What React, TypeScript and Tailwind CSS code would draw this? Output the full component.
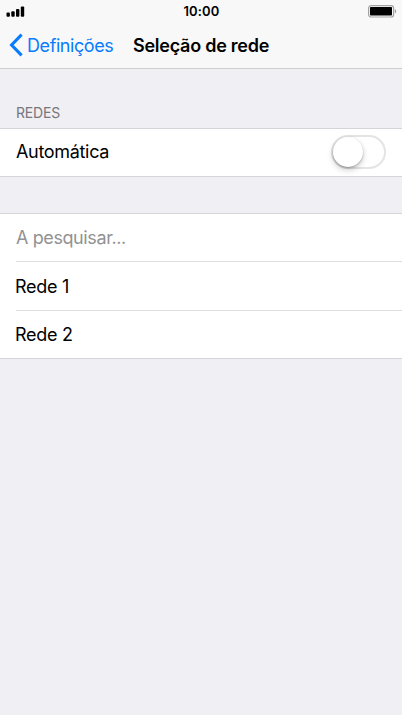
/* ---------- DATA ---------- */

const networks = ["Rede 1", "Rede 2"];

/* ---------- ICONS ---------- */

function SignalIcon() {
  return (
    <svg width="19" height="11" viewBox="0 0 19 11">
      <rect x="0.5" y="6.6" width="3.4" height="4.2" rx="1" />
      <rect x="5.3" y="5.2" width="3.4" height="5.6" rx="1" />
      <rect x="10" y="3" width="3.4" height="7.8" rx="1" />
      <rect x="14.8" y="0.4" width="3.4" height="10.4" rx="1" />
    </svg>
  );
}

function BatteryIcon() {
  return (
    <svg width="29" height="13" viewBox="0 0 29 13" fill="none">
      <rect x="0.6" y="0.6" width="25" height="11.4" rx="2.6" stroke="#a3a3a3" strokeWidth="1.2" />
      <rect x="2" y="2" width="22" height="8.6" rx="0.8" fill="#000" />
      <path d="M26.8 4.2c1.9.6 1.9 3.6 0 4.2z" fill="#a3a3a3" />
    </svg>
  );
}

function BackIcon() {
  return (
    <svg width="14" height="24" viewBox="0 0 14 24" fill="none">
      <path d="M12.6 1.7 2.6 12l10 10.3" stroke="#087cfb" strokeWidth="3.1" />
    </svg>
  );
}

/* ---------- COMPONENT ---------- */

export default function App() {
  return (
    <div className="h-[715px] w-[402px] overflow-hidden bg-[#efeff4] font-['Inter',sans-serif] text-black">
      <header className="h-[69px] border-b border-[#cdcdd0] bg-[#f8f8f8]">
        <div className="grid h-[22px] grid-cols-3 items-center pr-[5px] pl-1.5">
          <SignalIcon />
          <span className="text-center text-[13px] leading-none font-semibold tracking-[0.15px]">
            10:00
          </span>
          <div className="flex justify-end">
            <BatteryIcon />
          </div>
        </div>

        <div className="flex h-[46px] items-center pl-[9px]">
          <button className="flex w-[124px] items-center gap-1 text-[#087cfb]">
            <BackIcon />
            <span className="text-[18px] tracking-[-0.42px]">Definições</span>
          </button>
          <h1 className="text-[18px] font-semibold tracking-[-0.25px] whitespace-nowrap">
            Seleção de rede
          </h1>
        </div>
      </header>

      <main>
        <h2 className="flex h-[59px] items-end px-4 pb-[5px] text-[14px] tracking-[-0.15px] text-[#77777c]">
          REDES
        </h2>

        <section className="flex h-[49px] items-center justify-between border-y border-[#d5d5d9] bg-white px-4 pb-px">
          <span className="pb-px text-[18px] tracking-[-0.32px]">Automática</span>
          <button
            role="switch"
            aria-checked="false"
            aria-label="Automática"
            className="flex h-[34px] w-[55px] items-center rounded-full border-2 border-[#e4e4e4] bg-white"
          >
            <span className="h-[30px] w-[30px] rounded-full bg-white shadow-[0_3px_6px_rgba(0,0,0,0.2),0_1px_2px_rgba(0,0,0,0.25)]" />
          </button>
        </section>

        <section className="mt-9 border-y border-[#d5d5d9] bg-white pl-4">
          <div className="flex h-[47px] items-center text-[18px] tracking-[-0.4px] text-[#929292]">
            A pesquisar...
          </div>
          {networks.map((name) => (
            <div
              key={name}
              className="flex h-[49px] items-center border-t border-[#dedee0] text-[18px] tracking-[-0.3px] last:h-12"
            >
              <span className="-ml-px">{name}</span>
            </div>
          ))}
        </section>
      </main>
    </div>
  );
}
